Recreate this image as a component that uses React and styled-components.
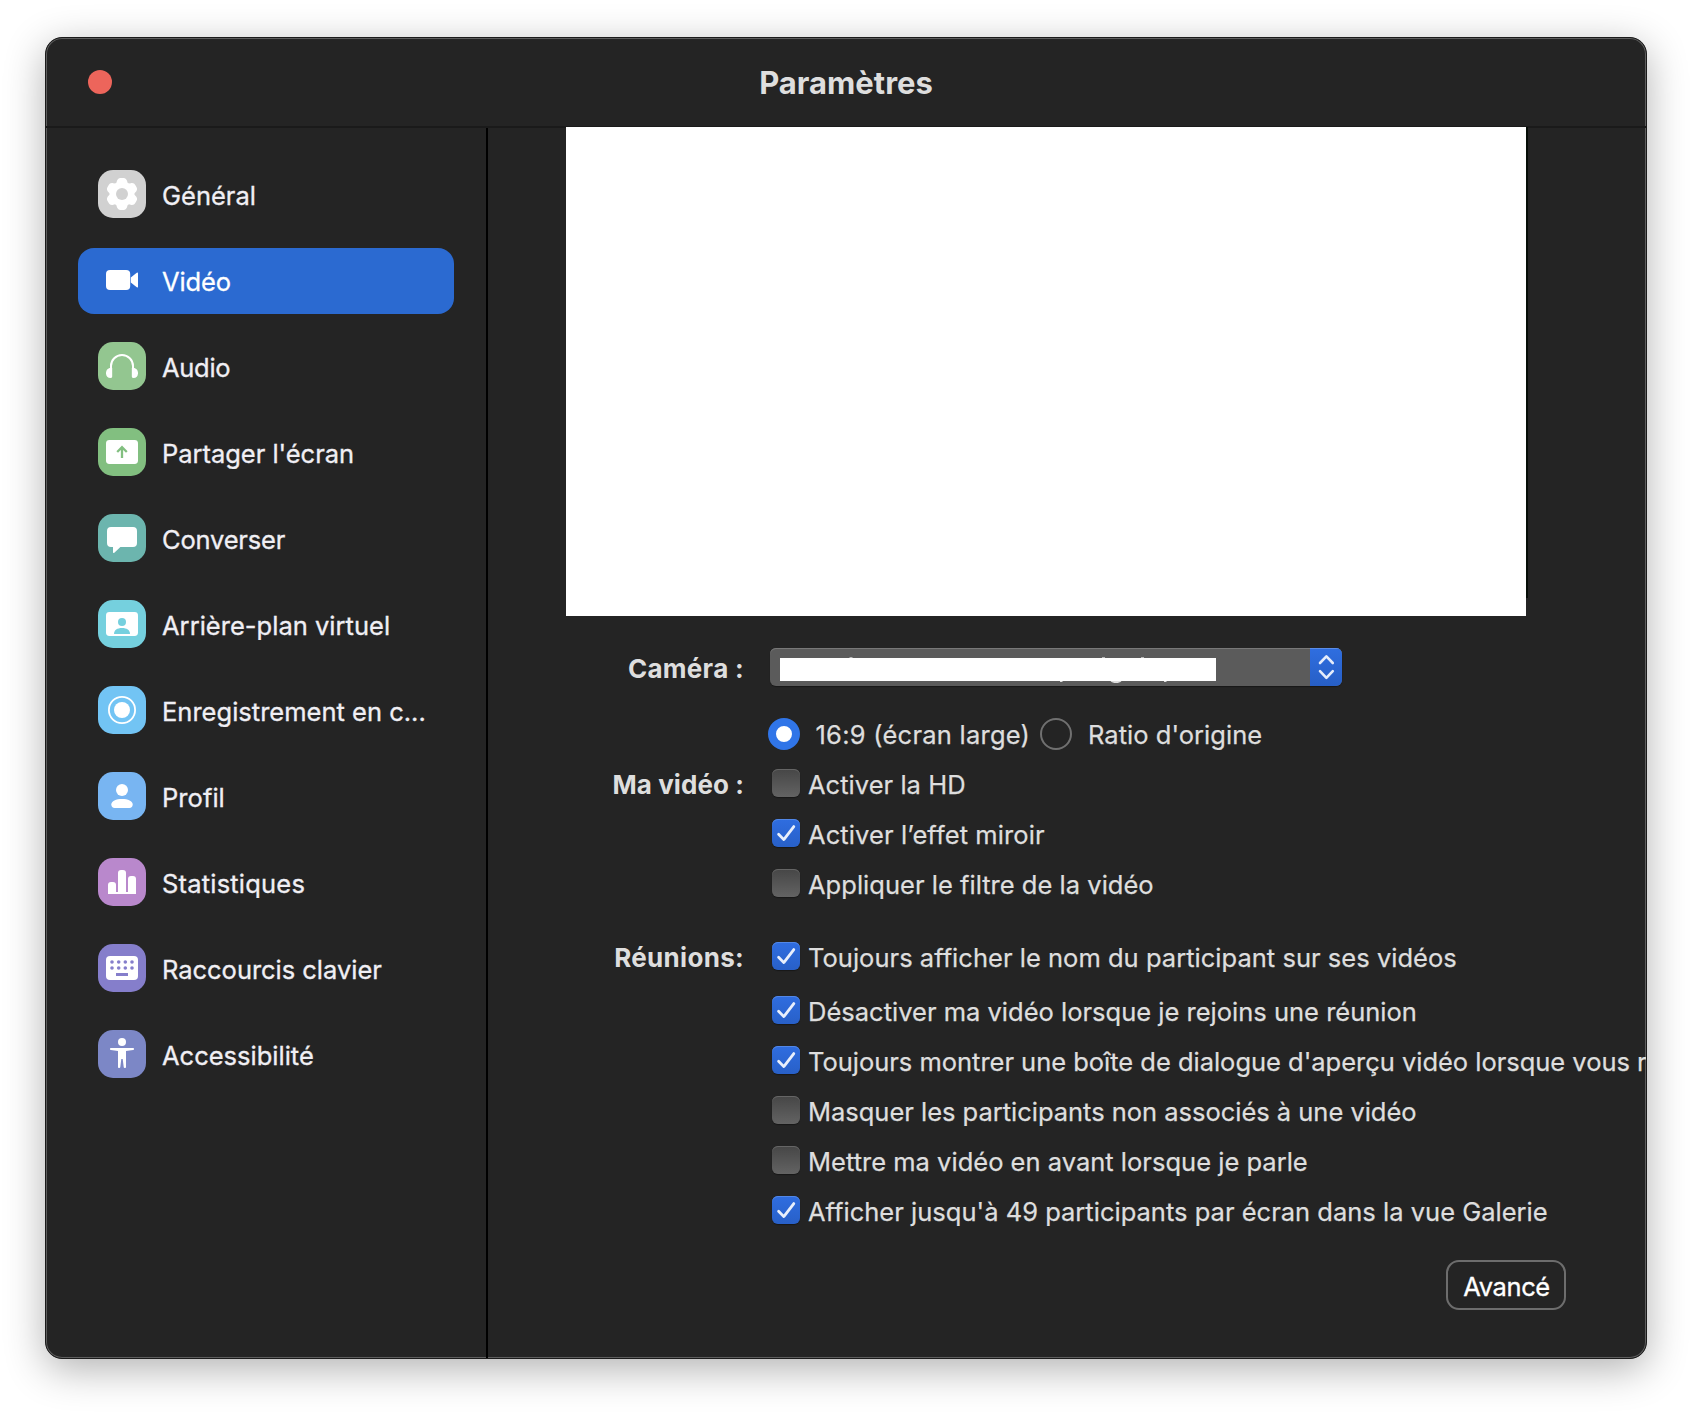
import React from 'react';
import styled, { createGlobalStyle } from 'styled-components';

const GlobalStyle = createGlobalStyle`
  * { box-sizing: border-box; }
  html, body { margin: 0; padding: 0; background: #fff; }
  body {
    font-family: Inter, "Liberation Sans", sans-serif;
    -webkit-font-smoothing: antialiased;
  }
`;

const Desktop = styled.div`
  width: 1692px;
  height: 1412px;
  padding: 37px 45px;
  background: #fff;
  overflow: hidden;
`;

const Window = styled.div`
  display: flex;
  flex-direction: column;
  width: 1602px;
  height: 1322px;
  border: 1px solid #1b1b1b;
  border-radius: 17px;
  background: #242424;
  overflow: hidden;
  box-shadow: inset 0 0 0 1px #5e5e5e, 0 10px 40px rgba(0, 0, 0, 0.31);
`;

const TitleBar = styled.header`
  display: grid;
  grid-template-columns: 1fr auto 1fr;
  align-items: center;
  flex: none;
  height: 90px;
  padding: 0 42px;
  border-bottom: 2px solid #1a1a1a;
`;

const CloseButton = styled.button`
  width: 24px;
  height: 24px;
  padding: 0;
  border: 0;
  border-radius: 50%;
  background: #ed655b;
`;

const Title = styled.h1`
  margin: 0;
  font-size: 31px;
  font-weight: 700;
  line-height: 90px;
  height: 88px;
  color: #dedede;
`;

const Body = styled.div`
  display: flex;
  flex: 1;
  min-height: 0;
`;

const Sidebar = styled.nav`
  display: flex;
  flex-direction: column;
  gap: 20px;
  flex: none;
  width: 442px;
  padding: 34px 32px 0;
  border-right: 2px solid #000;
`;

const NavItem = styled.a`
  display: flex;
  gap: 16px;
  height: 66px;
  padding: 8px 20px;
  border-radius: 16px;
  background: ${(p) => (p.$active ? '#2b6ad1' : 'transparent')};
  color: ${(p) => (p.$active ? '#ffffff' : '#f0eff4')};
`;

const IconTile = styled.span`
  flex: none;
  width: 48px;
  height: 48px;
  border-radius: 15px;
  background: ${(p) => p.$color};

  svg { display: block; }
`;

const NavText = styled.span`
  font-size: 25.5px;
  line-height: 52px;
  letter-spacing: ${(p) => p.$track || 0}px;
  -webkit-text-stroke: 0.3px currentColor;
  white-space: nowrap;
`;

const Main = styled.main`
  display: flex;
  flex-direction: column;
  flex: 1;
  min-width: 0;
`;

const PreviewRow = styled.div`
  display: flex;
  margin: -1px 0 0 78px;
`;

const Preview = styled.div`
  width: 960px;
  height: 489px;
  background: #fff;
`;

const PreviewEdge = styled.div`
  width: 2px;
  height: 471px;
  background: #060d07;
`;

const FormRow = styled.section`
  display: grid;
  grid-template-columns: 256px 1fr;
  column-gap: 24px;
  margin-top: ${(p) => p.$top}px;
  height: ${(p) => p.$height}px;
  color: #dedede;
`;

const RowLabel = styled.div`
  font-size: 26px;
  font-weight: 700;
  line-height: ${(p) => p.$line}px;
  letter-spacing: ${(p) => p.$track}px;
  text-align: right;
  white-space: nowrap;
`;

const Select = styled.div`
  position: relative;
  display: flex;
  justify-content: space-between;
  width: 572px;
  height: 38px;
  margin-left: 2px;
  border-radius: 6px;
  background: #5b5b5b;
  overflow: hidden;
  box-shadow: inset 0 1px 0 #787878, 0 1px 1px rgba(0, 0, 0, 0.35);
`;

const SelectValue = styled.div`
  width: 436px;
  height: 23px;
  margin: 10px 0 0 10px;
  background: #fff;
`;

const ValueMarks = styled.svg`
  position: absolute;
  inset: 0;
`;

const Stepper = styled.div`
  width: 32px;
  height: 38px;
  background: linear-gradient(#2f6ee0, #275fc6);
  box-shadow: inset 0 1px 0 #5b8de8;

  svg { display: block; }
`;

const RadioGroup = styled.div`
  display: flex;
`;

const RadioOption = styled.label`
  display: flex;
  gap: ${(p) => p.$gap}px;
  width: ${(p) => p.$width};
`;

const RadioDot = styled.span`
  flex: none;
  width: 32px;
  height: 32px;
  border-radius: 50%;
  border: ${(p) => (p.$on ? '8px solid #3075e8' : '2px solid #707070')};
  background: ${(p) => (p.$on ? '#ffffff' : 'transparent')};
`;

const OptionText = styled.span`
  font-size: 25.5px;
  line-height: ${(p) => p.$line || 32}px;
  letter-spacing: ${(p) => p.$track || 0}px;
  -webkit-text-stroke: 0.25px currentColor;
  white-space: nowrap;
`;

const CheckList = styled.div`
  display: flex;
  flex-direction: column;
  gap: 22px;
  padding-left: 4px;
  min-width: 0;
`;

const CheckRow = styled.label`
  display: flex;
  gap: 8px;
  height: 28px;
  margin-bottom: ${(p) => p.$after || 0}px;
`;

const CheckBox = styled.span`
  flex: none;
  width: 28px;
  height: 28px;
  border-radius: 6px;
  background: ${(p) =>
    p.$on ? 'linear-gradient(#2f6de0, #2860c8)' : 'linear-gradient(#464646, #636363)'};
  box-shadow: inset 0 1px 0 ${(p) => (p.$on ? '#5287e6' : '#656565')},
    0 1px 1px rgba(0, 0, 0, 0.35);

  svg { display: block; }
`;

const AdvancedButton = styled.button`
  align-self: flex-end;
  width: 120px;
  height: 50px;
  margin: 36px 80px 0 0;
  padding: 0 0 0 1px;
  border: 2px solid #6d6d6d;
  border-radius: 13px;
  background: transparent;
  color: #fff;
  font-family: inherit;
  font-size: 25.5px;
  line-height: 49px;
  letter-spacing: -0.36px;
  -webkit-text-stroke: 0.3px currentColor;
  overflow: hidden;
`;

const lobes = [0, 60, 120, 180, 240, 300];

const icons = {
  gear: (c) => (
    <>
      <circle cx="24" cy="24" r="12.4" />
      {lobes.map((a) => (
        <path
          key={a}
          d="M16.5 15C19 13.6 18.3 12 19.2 10.2C20.3 8 21.8 8 24 8S27.7 8 28.8 10.2C29.7 12 29 13.6 31.5 15L24 24Z"
          transform={`rotate(${a} 24 24)`}
        />
      ))}
      <circle cx="24" cy="24" r="6" fill={c} />
    </>
  ),
  video: () => (
    <>
      <rect x="8" y="14" width="24.2" height="20" rx="4" />
      <path d="M32.8 21.4L38.8 16.8Q40 16 40 17.4V30.6Q40 32 38.8 31.2L32.8 26.6Z" />
    </>
  ),
  audio: () => (
    <>
      <path d="M13 28V24a11 11 0 0 1 22 0v4" fill="none" stroke="#fff" strokeWidth="2" />
      <path d="M14.2 26H12.6C9.6 26 8 28.5 8 31.2C8 34 9.8 36 12.4 36Q14.2 36 14.2 34.4Z" />
      <path d="M33.8 26H35.4C38.4 26 40 28.5 40 31.2C40 34 38.2 36 35.6 36Q33.8 36 33.8 34.4Z" />
    </>
  ),
  share: (c) => (
    <>
      <rect x="8" y="12" width="32" height="24" rx="3.4" />
      <path d="M24 30V19.5M19.2 24L24 19.2L28.8 24" fill="none" stroke={c} strokeWidth="2.3" />
    </>
  ),
  chat: () => (
    <path d="M13 13H35Q39 13 39 17V29Q39 33 35 33H22.4L16.6 38.4Q15 39.6 15 38V33H13Q9 33 9 29V17Q9 13 13 13Z" />
  ),
  background: (c) => (
    <>
      <rect x="8" y="12" width="32" height="24" rx="3.4" />
      <circle cx="24" cy="22" r="4" fill={c} />
      <path d="M16 34C16 30 19.2 28 24 28S32 30 32 34Z" fill={c} />
    </>
  ),
  record: () => (
    <>
      <circle cx="24" cy="24" r="13.1" fill="none" stroke="#fff" strokeWidth="1.8" />
      <circle cx="24" cy="24" r="8" />
    </>
  ),
  profile: () => (
    <>
      <circle cx="24" cy="18" r="6" />
      <path d="M13.3 32.6C13.3 29 18 27 24 27S34.7 29 34.7 32.6C34.7 34.8 33.4 36 31.4 36H16.6C14.6 36 13.3 34.8 13.3 32.6Z" />
    </>
  ),
  stats: () => (
    <>
      <path d="M10 36V27Q10 24 13 24H15Q18 24 18 27V36Z" />
      <path d="M20 36V15Q20 12 23 12H25Q28 12 28 15V36Z" />
      <path d="M30 36V21Q30 18 33 18H35Q38 18 38 21V36Z" />
      <rect x="10" y="34" width="28" height="2" />
    </>
  ),
  keyboard: (c) => (
    <>
      <rect x="8" y="12" width="32" height="24" rx="4" />
      {[14, 20.7, 27.3, 34].map((x) => (
        <g key={x} fill={c}>
          <circle cx={x} cy="18" r="1.8" />
          <circle cx={x} cy="24" r="1.8" />
        </g>
      ))}
      <rect x="18" y="29" width="12" height="3" fill={c} />
    </>
  ),
  person: () => (
    <>
      <circle cx="24" cy="12" r="4" />
      <path d="M12.8 18H35.2C36.3 18 36.3 19.9 35.2 20.1L28 21V37C28 38.3 25.9 38.3 25.7 37L24.7 29H23.3L22.3 37C22.1 38.3 20 38.3 20 37V21L12.8 20.1C11.7 19.9 11.7 18 12.8 18Z" />
    </>
  ),
};

const navItems = [
  { label: 'Général', icon: 'gear', color: '#d1d1d1', track: 0 },
  { label: 'Vidéo', icon: 'video', color: 'transparent', track: -0.1, active: true },
  { label: 'Audio', icon: 'audio', color: '#93c690', track: -0.3 },
  { label: "Partager l'écran", icon: 'share', color: '#82bf80', track: -0.03 },
  { label: 'Converser', icon: 'chat', color: '#6cb5ae', track: -0.2 },
  { label: 'Arrière-plan virtuel', icon: 'background', color: '#75d0de', track: 0.02 },
  { label: 'Enregistrement en c...', icon: 'record', color: '#72c4f4', track: 0.01 },
  { label: 'Profil', icon: 'profile', color: '#78b5f2', track: 0.05 },
  { label: 'Statistiques', icon: 'stats', color: '#b988cc', track: 0.2 },
  { label: 'Raccourcis clavier', icon: 'keyboard', color: '#857ecb', track: -0.03 },
  { label: 'Accessibilité', icon: 'person', color: '#7c87c6', track: 0 },
];

const videoOptions = [
  { label: 'Activer la HD', on: false, track: 0.03 },
  { label: 'Activer l’effet miroir', on: true, track: 0.1 },
  { label: 'Appliquer le filtre de la vidéo', on: false, track: 0.02 },
];

const meetingOptions = [
  { label: 'Toujours afficher le nom du participant sur ses vidéos', on: true, track: 0.025, after: 4 },
  { label: 'Désactiver ma vidéo lorsque je rejoins une réunion', on: true, track: 0.005 },
  { label: "Toujours montrer une boîte de dialogue d'aperçu vidéo lorsque vous r", on: true, track: -0.02 },
  { label: 'Masquer les participants non associés à une vidéo', on: false, track: -0.02 },
  { label: 'Mettre ma vidéo en avant lorsque je parle', on: false, track: 0.01 },
  { label: "Afficher jusqu'à 49 participants par écran dans la vue Galerie", on: true, track: 0.01 },
];

function Options({ items }) {
  return (
    <CheckList>
      {items.map((o) => (
        <CheckRow key={o.label} $after={o.after}>
          <CheckBox $on={o.on}>
            {o.on && (
              <svg width="28" height="28" viewBox="0 0 28 28" fill="none">
                <path
                  d="M6.6 15.2L11.8 20.6L21.8 7.6"
                  stroke="#e8effc"
                  strokeWidth="2.8"
                  strokeLinecap="round"
                  strokeLinejoin="round"
                />
              </svg>
            )}
          </CheckBox>
          <OptionText $track={o.track}>{o.label}</OptionText>
        </CheckRow>
      ))}
    </CheckList>
  );
}

export default function App() {
  return (
    <>
      <GlobalStyle />
      <Desktop>
        <Window>
          <TitleBar>
            <CloseButton aria-label="Fermer" />
            <Title>Paramètres</Title>
          </TitleBar>
          <Body>
            <Sidebar>
              {navItems.map((n) => (
                <NavItem key={n.label} $active={n.active}>
                  <IconTile $color={n.color}>
                    <svg width="48" height="48" viewBox="0 0 48 48" fill="#fff">
                      {icons[n.icon](n.color)}
                    </svg>
                  </IconTile>
                  <NavText $track={n.track}>{n.label}</NavText>
                </NavItem>
              ))}
            </Sidebar>
            <Main>
              <PreviewRow>
                <Preview />
                <PreviewEdge />
              </PreviewRow>
              <FormRow $top={32} $height={38}>
                <RowLabel $line={41} $track={0.3}>Caméra :</RowLabel>
                <Select>
                  <SelectValue />
                  <Stepper>
                    <svg width="32" height="38" viewBox="0 0 32 38" fill="none">
                      <path
                        d="M10 15L16.4 8.4L22.8 15M10 23.2L16.4 29.8L22.8 23.2"
                        stroke="#e4ecfb"
                        strokeWidth="2.6"
                        strokeLinecap="round"
                        strokeLinejoin="round"
                      />
                    </svg>
                  </Stepper>
                  <ValueMarks width="572" height="38" fill="#dedede">
                    <rect x="79.5" y="9" width="3" height="1" opacity="0.7" />
                    <rect x="332" y="9" width="3" height="1" opacity="0.7" />
                    <rect x="371" y="9" width="3" height="1" opacity="0.7" />
                    <rect x="290" y="33" width="2.5" height="1" />
                    <path d="M340.5 33H351.5C349.5 35.8 342.5 35.8 340.5 33Z" />
                    <rect x="394" y="33" width="2.5" height="1" />
                  </ValueMarks>
                </Select>
              </FormRow>
              <FormRow $top={32} $height={32}>
                <span />
                <RadioGroup>
                  <RadioOption $gap={15.5} $width="272px">
                    <RadioDot $on />
                    <OptionText $line={34} $track={0.24}>16:9 (écran large)</OptionText>
                  </RadioOption>
                  <RadioOption $gap={16} $width="auto">
                    <RadioDot />
                    <OptionText $line={34} $track={0.03}>Ratio d'origine</OptionText>
                  </RadioOption>
                </RadioGroup>
              </FormRow>
              <FormRow $top={19} $height={128}>
                <RowLabel $line={32} $track={0.08}>Ma vidéo :</RowLabel>
                <Options items={videoOptions} />
              </FormRow>
              <FormRow $top={45} $height={282}>
                <RowLabel $line={32} $track={0.3}>Réunions:</RowLabel>
                <Options items={meetingOptions} />
              </FormRow>
              <AdvancedButton>Avancé</AdvancedButton>
            </Main>
          </Body>
        </Window>
      </Desktop>
    </>
  );
}
